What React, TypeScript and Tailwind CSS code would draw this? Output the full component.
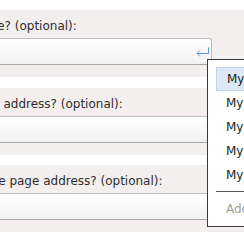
import React from 'react';

const font = { fontFamily: '"DejaVu Sans", sans-serif' };

const fields = [
  { label: 'What is your name? (optional):', focused: true, gap: 'mt-0', shift: 'ml-[-109px]' },
  { label: 'What is your email address? (optional):', focused: false, gap: 'mt-[11px]', shift: 'ml-[-113px]' },
  { label: 'What is your home page address? (optional):', focused: false, gap: 'mt-[10px]', shift: 'ml-[-108px]' },
];

const suggestions = ['My name', 'My email', 'My home page', 'My work email', 'My blog'];

const ReturnIcon = () => (
  <svg width="14" height="10" viewBox="0 0 14 10" className="text-[#5a95d6]">
    <path d="M12.5 0.5 V6.5 H1" fill="none" stroke="currentColor" strokeWidth="1" />
    <path d="M4 3.5 L1 6.5 L4 9.5" fill="none" stroke="currentColor" strokeWidth="1" />
  </svg>
);

export default function App() {
  return (
    <div className="relative w-[244px] h-[244px] overflow-hidden bg-white text-[12px] text-[#2e2e2e]" style={font}>
      <div className="flex flex-col pt-[10px]">
        {fields.map((f) => (
          <div key={f.label} className={`${f.gap} h-[67px] bg-[#f3efef] pt-[7px]`}>
            <div className={`${f.shift} whitespace-nowrap leading-[18px]`}>{f.label}</div>
            <div className="ml-[-109px] mt-[3px] w-[321px] h-[27px] rounded-r-[3px] border border-[#bdbdbd] border-b-[#a9a9a9] bg-gradient-to-b from-white to-[#f1f1f1] flex items-center justify-end pr-[1px]">
              {f.focused && <ReturnIcon />}
            </div>
          </div>
        ))}
      </div>

      <div className="absolute left-[207px] top-[59px] w-[120px] border border-[#3a3a3a] bg-white pt-[7px] pl-[8px]">
        {suggestions.map((s, i) => (
          <div
            key={s}
            className={`h-[24px] flex items-center pl-[10px] whitespace-nowrap text-[#222] ${
              i === 0 ? 'bg-[#dce8f5] border border-[#bfd5ec] pl-[9px]' : ''
            }`}
          >
            {s}
          </div>
        ))}
        <div className="mt-[4px] h-px bg-[#555]" />
        <div className="mt-[5px] mb-[5px] h-[24px] flex items-center pl-[10px] whitespace-nowrap text-[#a0a0a0]">
          Add new entry…
        </div>
      </div>
    </div>
  );
}
